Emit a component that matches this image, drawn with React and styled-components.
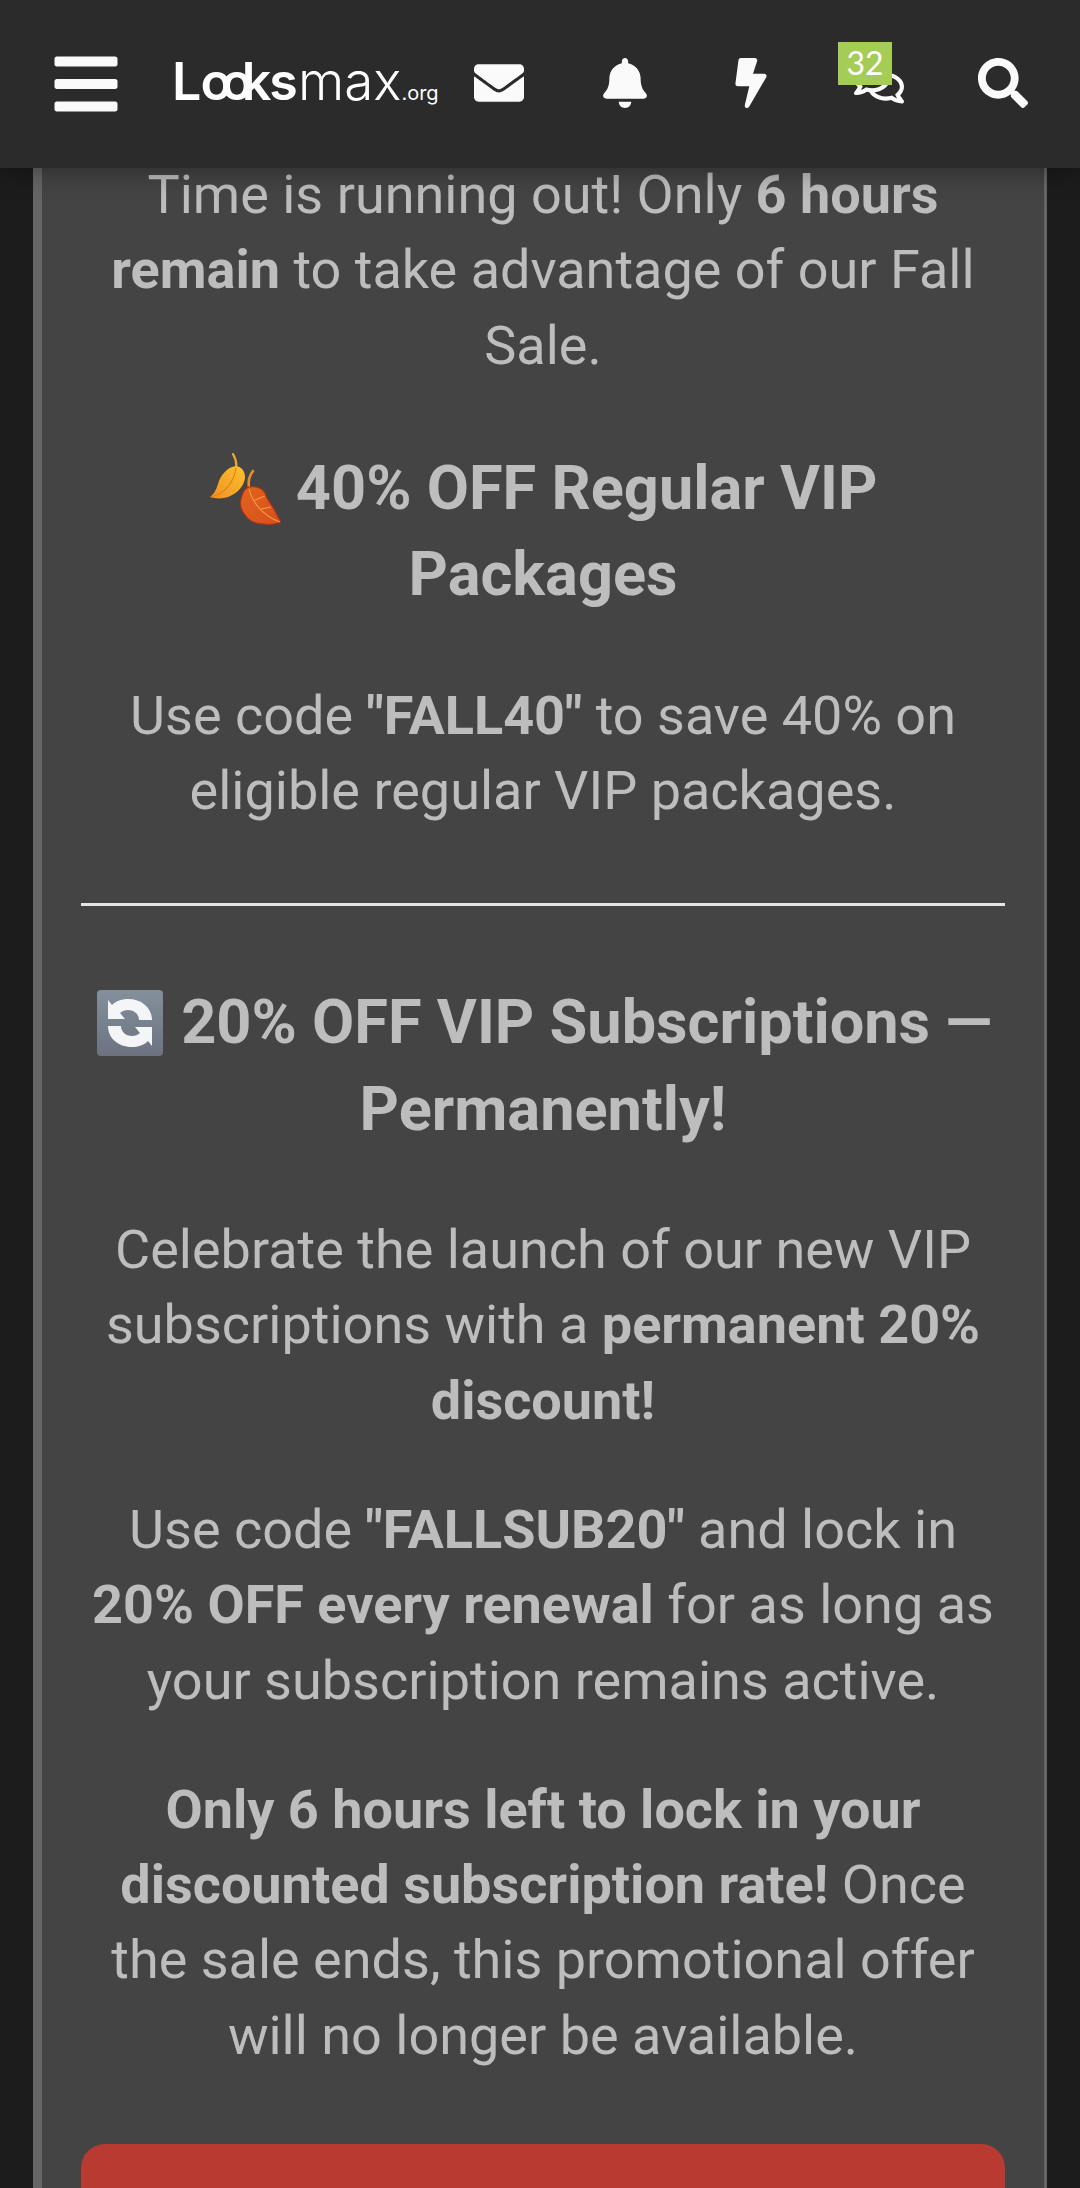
import styled, { createGlobalStyle } from "styled-components";
import { FaBars, FaEnvelope, FaBell, FaBolt, FaRegComments, FaSearch } from "react-icons/fa";

const GlobalStyle = createGlobalStyle`
  html, body {
    margin: 0;
    padding: 0;
    height: 2188px;
    overflow: hidden;
    background: #1c1c1c;
  }
`;

const Header = styled.header`
  position: relative;
  z-index: 2;
  height: 168px;
  display: flex;
  align-items: center;
  background: #2b2b2b;
  box-shadow: 0 4px 24px rgba(0, 0, 0, 0.35);
  color: #fafafa;
`;

const IconSlot = styled.div`
  position: relative;
  box-sizing: border-box;
  width: ${(props) => props.width || 126}px;
  height: 168px;
  margin-left: ${(props) => props.gap || 0}px;
  padding-bottom: ${(props) => props.lift ?? 3}px;
  flex: none;
  display: flex;
  align-items: center;
  justify-content: center;
  font-size: ${(props) => props.size || 50}px;
`;

const Logo = styled.div`
  width: 264px;
  margin-left: 1px;
  flex: none;
  display: flex;
  align-items: baseline;
  font-family: "Inter", sans-serif;
  font-size: 52px;
  color: #fff;
  line-height: 1;
  white-space: nowrap;
  transform: translateY(-3px);
`;

const LogoBold = styled.span`
  font-weight: 600;
  letter-spacing: ${(props) => props.spacing || 0}px;
`;

const LogoLight = styled.span`
  font-weight: 300;
  font-size: 53px;
  margin-left: 2px;
`;

const LogoTld = styled.span`
  font-weight: 400;
  font-size: 20px;
`;

const Badge = styled.span`
  position: absolute;
  left: 22px;
  top: 42px;
  width: 54px;
  height: 43px;
  background: #a5cc55;
  color: #fff;
  font-family: "Lato", sans-serif;
  font-size: 32px;
  line-height: 42px;
  text-align: center;
`;

const Page = styled.main`
  margin-top: -11px;
  padding: 0 33px;
`;

const Panel = styled.section`
  background: #444444;
  border-left: 9px solid #666666;
  border-right: 3px solid #666666;
  padding: 0 39px;
  font-family: "Roboto", sans-serif;
  color: #bdbdbd;
  text-align: center;
`;

const Para = styled.p`
  margin: 54px 0;
  font-size: 54px;
  line-height: 75.3px;
  &:first-child {
    margin-top: 0;
  }
`;

const Title = styled.h2`
  margin: 62px 0 60px;
  font-size: 61.3px;
  line-height: 86.4px;
  font-weight: 700;
`;

const Rule = styled.hr`
  margin: 75px 0 73px;
  height: 3px;
  border: 0;
  background: #e6e6e6;
`;

const Emoji = styled.svg`
  width: 72px;
  height: 72px;
  vertical-align: -16px;
`;

const RedButton = styled.div`
  margin-top: 71px;
  height: 120px;
  border-radius: 24px;
  background: #b83a30;
`;

const LeavesEmoji = () => (
  <Emoji viewBox="0 0 72 72">
    <defs>
      <linearGradient id="leafA" x1="0" y1="1" x2="1" y2="0">
        <stop offset="0" stopColor="#f08f24" />
        <stop offset="1" stopColor="#fcc22f" />
      </linearGradient>
      <linearGradient id="leafB" x1="0" y1="0" x2="1" y2="1">
        <stop offset="0" stopColor="#e2631e" />
        <stop offset="1" stopColor="#d6501c" />
      </linearGradient>
    </defs>
    <path d="M24 1c3 5 4 10 3 16" fill="none" stroke="#eeaa2e" strokeWidth="2.2" strokeLinecap="round" />
    <path d="M27 13c6 1 9 5 9 12-1 9-10 18-21 20-5 1-11 0-14-1 4-3 6-7 8-13 2-8 9-17 18-18z" fill="url(#leafA)" />
    <path d="M2 44c13-3 23-14 25-29" fill="none" stroke="#d97f1a" strokeWidth="1.1" />
    <path d="M44 18c-4 5-5 11-4 17" fill="none" stroke="#ec8c32" strokeWidth="2.6" strokeLinecap="round" />
    <path d="M40 34c7-1 13 1 16 6 2 7 7 12 10 18 2 4 4 8 6 11-5 2-12 3-17 2-8 0-15-3-19-9-4-5-6-12-3-19 1-5 4-8 7-9z" fill="url(#leafB)" stroke="#a8321a" strokeWidth="1.2" />
    <path d="M40 36c3 13 14 27 31 33M46 47l10-4M52 56l10-2" fill="none" stroke="#f29a4a" strokeWidth="1.1" />
  </Emoji>
);

const RefreshEmoji = () => (
  <Emoji viewBox="0 0 72 72">
    <defs>
      <linearGradient id="tile" x1="0" y1="0" x2="0" y2="1">
        <stop offset="0" stopColor="#84909c" />
        <stop offset="1" stopColor="#6d7280" />
      </linearGradient>
    </defs>
    <rect x="3" y="3" width="66" height="66" rx="4" fill="url(#tile)" />
    <path d="M14 13l4 5c4-4 10-6 16-6 14 0 24 9 24 21H45c0-6-5-10-11-10-3 0-6 1-8 3l5 6H14z" fill="#f4f5f6" />
    <path d="M58 59l-4-5c-4 4-10 6-16 6-14 0-24-9-24-21h13c0 6 5 10 11 10 3 0 6-1 8-3l-5-6h17z" fill="#f4f5f6" />
  </Emoji>
);

export default function App() {
  return (
    <>
      <GlobalStyle />
      <Header>
        <IconSlot width={171} size={72} lift={0}><FaBars /></IconSlot>
        <Logo>
          <LogoBold spacing={-1}>L</LogoBold>
          <LogoBold spacing={-11}>oo</LogoBold>
          <LogoBold spacing={-2}>ks</LogoBold>
          <LogoLight>max</LogoLight>
          <LogoTld>.org</LogoTld>
        </Logo>
        <IconSlot><FaEnvelope /></IconSlot>
        <IconSlot><FaBell /></IconSlot>
        <IconSlot><FaBolt /></IconSlot>
        <IconSlot gap={2} lift={0}>
          <FaRegComments />
          <Badge>32</Badge>
        </IconSlot>
        <IconSlot width={121}><FaSearch /></IconSlot>
      </Header>
      <Page>
        <Panel>
          <Para>
            Time is running out! Only <b>6 hours remain</b> to take advantage of our Fall Sale.
          </Para>
          <Title>
            <LeavesEmoji /> 40% OFF Regular VIP Packages
          </Title>
          <Para>
            Use code <b>"FALL40"</b> to save 40% on eligible regular VIP packages.
          </Para>
          <Rule />
          <Title>
            <RefreshEmoji /> 20% OFF VIP Subscriptions — Permanently!
          </Title>
          <Para>
            Celebrate the launch of our new VIP subscriptions with a <b>permanent 20% discount!</b>
          </Para>
          <Para>
            Use code <b>"FALLSUB20"</b> and lock in <b>20% OFF every renewal</b> for as long as your subscription remains active.
          </Para>
          <Para>
            <b>Only 6 hours left to lock in your discounted subscription rate!</b> Once the sale ends, this promotional offer will no longer be available.
          </Para>
          <RedButton />
        </Panel>
      </Page>
    </>
  );
}
